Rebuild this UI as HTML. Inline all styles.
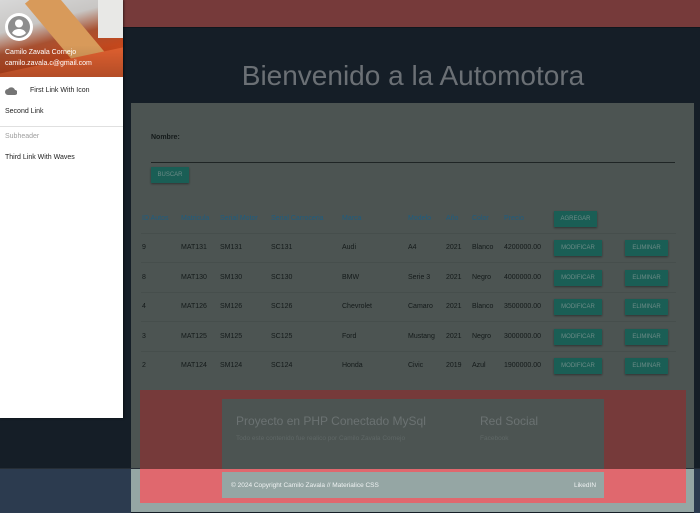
<!DOCTYPE html><html><head><style>
*{margin:0;padding:0;box-sizing:border-box}
body{width:700px;height:513px;overflow:hidden;background:#151e27;font-family:"Liberation Sans",sans-serif;position:relative}
.a{position:absolute}
.t{font-size:7px;color:#141a1a;white-space:nowrap}
.h{font-size:7px;color:#1e5d80;white-space:nowrap}
.b{position:absolute;background:#1a5e55;color:#6c8b87;font-size:6px;text-align:center;line-height:16px;height:16px;box-shadow:0 1px 2px rgba(0,0,0,.4)}
.sep{position:absolute;left:141px;width:535px;height:1px;background:#464e4c}
</style></head><body>
<div class="a" style="left:123px;top:0;width:577px;height:27px;background:#763a3a"></div>
<div class="a" style="left:0;top:27px;width:700px;height:1px;background:#10161d"></div>
<div class="a" style="left:123px;top:60px;width:580px;text-align:center;font-size:28px;color:#6b7075">Bienvenido a la Automotora</div>
<div class="a" style="left:131px;top:103px;width:563px;height:366px;background:#4c5452"></div>
<div class="a" style="left:131px;top:469px;width:563px;height:43px;background:#95a6a4"></div>
<div class="a" style="left:0;top:469px;width:131px;height:44px;background:#2c3b4f"></div>
<div class="a" style="left:694px;top:469px;width:6px;height:44px;background:#2c3b4f"></div>
<div class="a" style="left:0;top:468px;width:700px;height:1px;background:#262e36"></div>
<div class="a t" style="left:151px;top:134px;font-weight:bold">Nombre:</div>
<div class="a" style="left:151px;top:162px;width:524px;height:1px;background:#1f2525"></div>
<div class="b" style="left:151px;top:167px;width:38px">BUSCAR</div>
<div class="a h" style="left:142px;top:215px">ID Autos</div>
<div class="a h" style="left:181px;top:215px">Matricula</div>
<div class="a h" style="left:220px;top:215px">Serial Motor</div>
<div class="a h" style="left:271px;top:215px">Serial Carroceria</div>
<div class="a h" style="left:342px;top:215px">Marca</div>
<div class="a h" style="left:408px;top:215px">Modelo</div>
<div class="a h" style="left:446px;top:215px">Año</div>
<div class="a h" style="left:472px;top:215px">Color</div>
<div class="a h" style="left:504px;top:215px">Precio</div>
<div class="b" style="left:554px;top:211px;width:43px">AGREGAR</div>
<div class="sep" style="top:233px"></div>
<div class="sep" style="top:262px"></div>
<div class="sep" style="top:292px"></div>
<div class="sep" style="top:321px"></div>
<div class="sep" style="top:351px"></div>
<div id="rows"></div>
<script>
var r=[["9","MAT131","SM131","SC131","Audi","A4","2021","Blanco","4200000.00"],["8","MAT130","SM130","SC130","BMW","Serie 3","2021","Negro","4000000.00"],["4","MAT126","SM126","SC126","Chevrolet","Camaro","2021","Blanco","3500000.00"],["3","MAT125","SM125","SC125","Ford","Mustang","2021","Negro","3000000.00"],["2","MAT124","SM124","SC124","Honda","Civic","2019","Azul","1900000.00"]];
var xs=[142,181,220,271,342,408,446,472,504],h="";
r.forEach(function(row,i){var y=244+i*29.5;row.forEach(function(c,j){h+='<div class="a t" style="left:'+xs[j]+'px;top:'+y+'px">'+c+'</div>'});
h+='<div class="b" style="left:554px;top:'+(y-4)+'px;width:48px">MODIFICAR</div><div class="b" style="left:625px;top:'+(y-4)+'px;width:43px">ELIMINAR</div>'});
document.getElementById('rows').innerHTML=h;
</script>
<div class="a" style="left:140px;top:390px;width:546px;height:79px;background:#763a3a"></div>
<div class="a" style="left:140px;top:469px;width:546px;height:34px;background:#e0686e"></div>
<div class="a" style="left:222px;top:399px;width:382px;height:70px;background:#4c5452"></div>
<div class="a" style="left:222px;top:472px;width:382px;height:26px;background:#95a6a4"></div>
<div class="a" style="left:236px;top:414px;font-size:12px;color:#6b7272">Proyecto en PHP Conectado MySql</div>
<div class="a" style="left:236px;top:435px;font-size:6.5px;color:#5f6766">Todo este contenido fue realico por Camilo Zavala Cornejo</div>
<div class="a" style="left:480px;top:414px;font-size:12px;color:#6b7272">Red Social</div>
<div class="a" style="left:480px;top:435px;font-size:6.5px;color:#5f6766">Facebook</div>
<div class="a" style="left:231px;top:482px;font-size:6.5px;color:#eef2f2">© 2024 Copyright Camilo Zavala // Materialice CSS</div>
<div class="a" style="left:574px;top:482px;font-size:6.5px;color:#eef2f2">LikedIN</div>
<div class="a" style="left:0;top:0;width:123px;height:418px;background:#fff;box-shadow:1px 0 2px rgba(0,0,0,.5)"></div>
<div class="a" style="left:0;top:0;width:123px;height:77px;overflow:hidden;background:linear-gradient(165deg,#d8d8d8 0%,#c8c6c4 30%,#a85030 50%,#c4471c 70%,#e0612a 100%)">
<div class="a" style="left:60px;top:-20px;width:30px;height:120px;background:#d89a5a;transform:rotate(-40deg)"></div>
<div class="a" style="left:98px;top:0;width:25px;height:38px;background:#e8e8e6"></div>
<div class="a" style="left:0;top:60px;width:130px;height:30px;background:#e06030;transform:rotate(-12deg)"></div>
<div class="a" style="left:0;top:45px;width:123px;height:32px;background:linear-gradient(transparent,rgba(0,0,0,.2))"></div>
<svg class="a" style="left:5px;top:13px" width="28" height="28" viewBox="0 0 28 28"><circle cx="14" cy="14" r="14" fill="#fff"/><circle cx="14" cy="14" r="11" fill="#8e8e8e"/><circle cx="14" cy="10.5" r="4" fill="#fff"/><path d="M7 20c1.5-3 4-4 7-4s5.5 1 7 4c-2 2-4.3 3-7 3s-5-1-7-3z" fill="#fff"/></svg>
<div class="a" style="left:5px;top:49px;font-size:7px;color:#fff">Camilo Zavala Cornejo</div>
<div class="a" style="left:5px;top:60px;font-size:7px;color:#fff">camilo.zavala.c@gmail.com</div>
</div>
<svg class="a" style="left:5px;top:87px" width="12" height="8" viewBox="0 0 12 8"><path d="M3 8a3 3 0 010-6 4 4 0 017 1 2.5 2.5 0 010 5z" fill="#757575"/></svg>
<div class="a t" style="left:30px;top:87px;color:#222">First Link With Icon</div>
<div class="a t" style="left:5px;top:108px;color:#222">Second Link</div>
<div class="a" style="left:0;top:126px;width:123px;height:1px;background:#e0e0e0"></div>
<div class="a t" style="left:5px;top:133px;color:#9e9e9e">Subheader</div>
<div class="a t" style="left:5px;top:154px;color:#222">Third Link With Waves</div>
</body></html>
